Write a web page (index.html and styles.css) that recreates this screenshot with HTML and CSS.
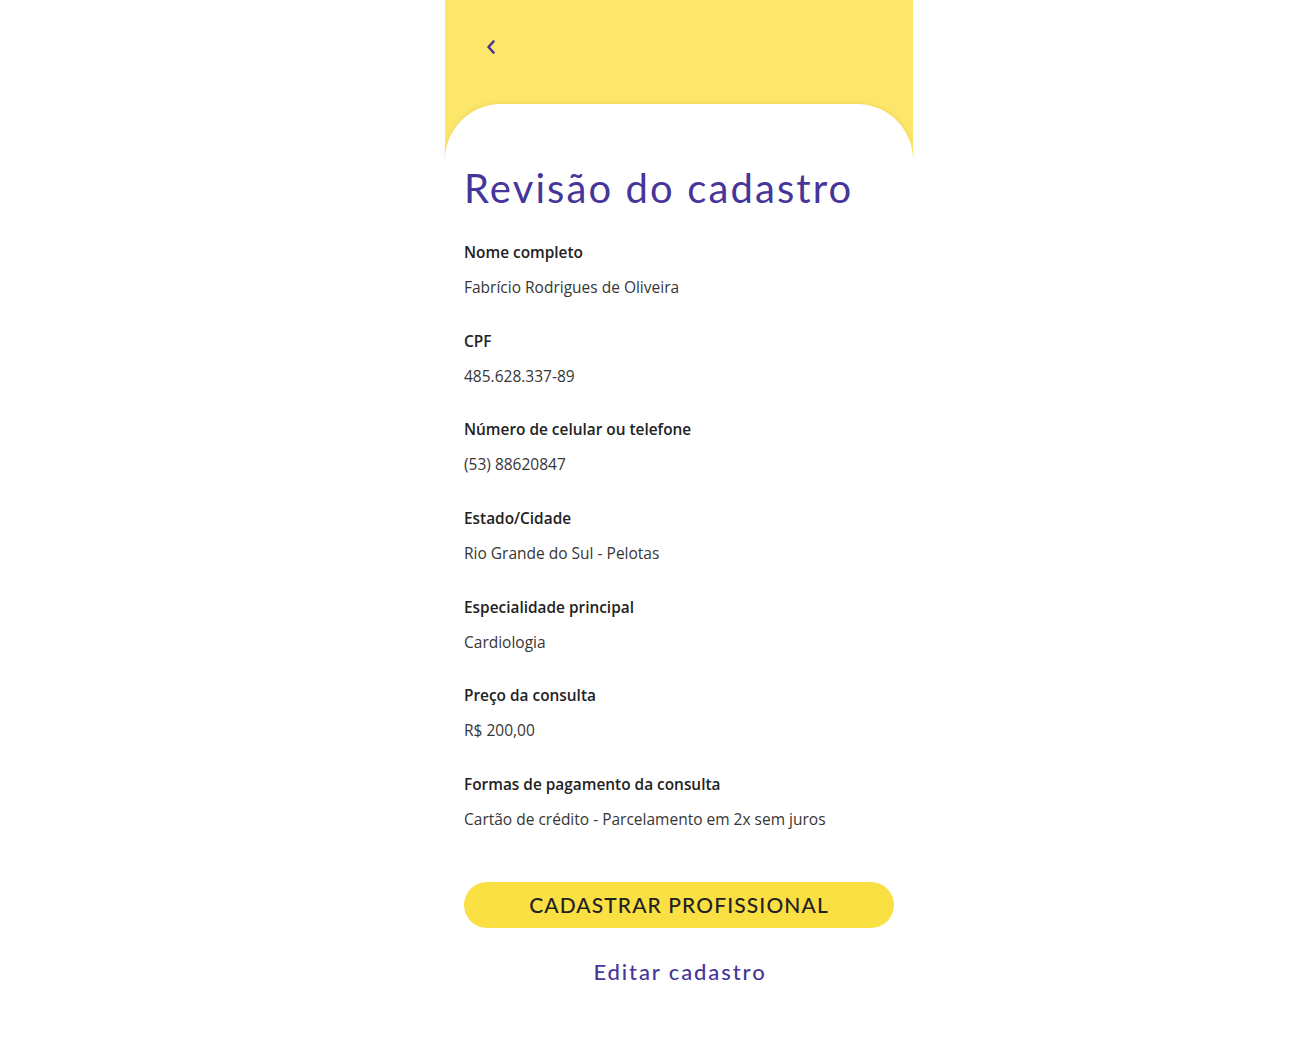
FILE: index.html
```html
<!DOCTYPE html>
<html lang="pt-BR">
<head>
<meta charset="utf-8">
<title>Revisão do cadastro</title>
<link rel="stylesheet" href="styles.css">
</head>
<body>
<div class="screen">
  <header class="header">
    <button class="back" aria-label="Voltar">
      <svg width="12" height="16" viewBox="0 0 12 16"><path d="M8.5 2.5 L3.5 8 L8.5 13.5" fill="none" stroke="#46369a" stroke-width="2.6" stroke-linecap="round" stroke-linejoin="round"/></svg>
    </button>
  </header>
  <main class="panel">
    <h1 class="title">Revisão do cadastro</h1>
    <dl class="fields">
      <div class="field"><dt>Nome completo</dt><dd>Fabrício Rodrigues de Oliveira</dd></div>
      <div class="field"><dt>CPF</dt><dd>485.628.337-89</dd></div>
      <div class="field"><dt>Número de celular ou telefone</dt><dd>(53) 88620847</dd></div>
      <div class="field"><dt>Estado/Cidade</dt><dd>Rio Grande do Sul - Pelotas</dd></div>
      <div class="field"><dt>Especialidade principal</dt><dd>Cardiologia</dd></div>
      <div class="field"><dt>Preço da consulta</dt><dd>R$ 200,00</dd></div>
      <div class="field"><dt>Formas de pagamento da consulta</dt><dd>Cartão de crédito - Parcelamento em 2x sem juros</dd></div>
    </dl>
    <button class="primary">CADASTRAR PROFISSIONAL</button>
    <a class="edit" href="#">Editar cadastro</a>
  </main>
</div>
</body>
</html>
```
FILE: styles.css
```css
html, body {
  margin: 0;
  padding: 0;
  background: #ffffff;
}
.screen {
  width: 468px;
  margin-left: 445px;
  font-family: "Open Sans", "Noto Sans", sans-serif;
}
.header {
  height: 160px;
  background: #fde76b;
  padding: 39px 0 0 40px;
  box-sizing: border-box;
  display: flex;
  flex-direction: column;
  justify-content: space-between;
}
.header::after {
  content: "";
  display: block;
  height: 56px;
  background: #ffffff;
  border-radius: 56px 56px 0 0;
  margin-left: -40px;
  box-shadow: 0 -1px 5px rgba(120, 100, 0, 0.12);
}
.back {
  background: none;
  border: 0;
  padding: 0;
  width: 12px;
  height: 16px;
  display: block;
  cursor: pointer;
}
.back svg { display: block; }
.panel {
  background: #ffffff;
  padding: 4px 19px 40px 19px;
  display: flex;
  flex-direction: column;
  position: relative;
}
.title {
  margin: 0 0 31px 0;
  font-family: "Lato", sans-serif;
  font-weight: 400;
  font-size: 40px;
  line-height: 48px;
  color: #46369a;
  letter-spacing: 2.1px;
}
.fields {
  margin: 0;
  display: flex;
  flex-direction: column;
  gap: 34.67px;
}
.field dt {
  font-weight: 600;
  font-size: 15.4px;
  line-height: 20px;
  color: #222222;
  margin-bottom: 14px;
}
.field dd {
  margin: 0;
  font-size: 15.5px;
  line-height: 20px;
  color: #363636;
}
.primary {
  margin-top: 53px;
  height: 46px;
  border: 0;
  border-radius: 23px;
  background: #fbe043;
  font-family: "Lato", sans-serif;
  font-weight: 500;
  font-size: 21px;
  color: #222222;
  letter-spacing: 1.1px;
  padding: 0 0 1px 0;
  cursor: pointer;
}
.edit {
  margin-top: 32px;
  align-self: center;
  font-family: "Lato", sans-serif;
  font-weight: 500;
  font-size: 22px;
  line-height: 24px;
  color: #46369a;
  text-decoration: none;
  letter-spacing: 1.9px;
  margin-left: 2px;
}
```
